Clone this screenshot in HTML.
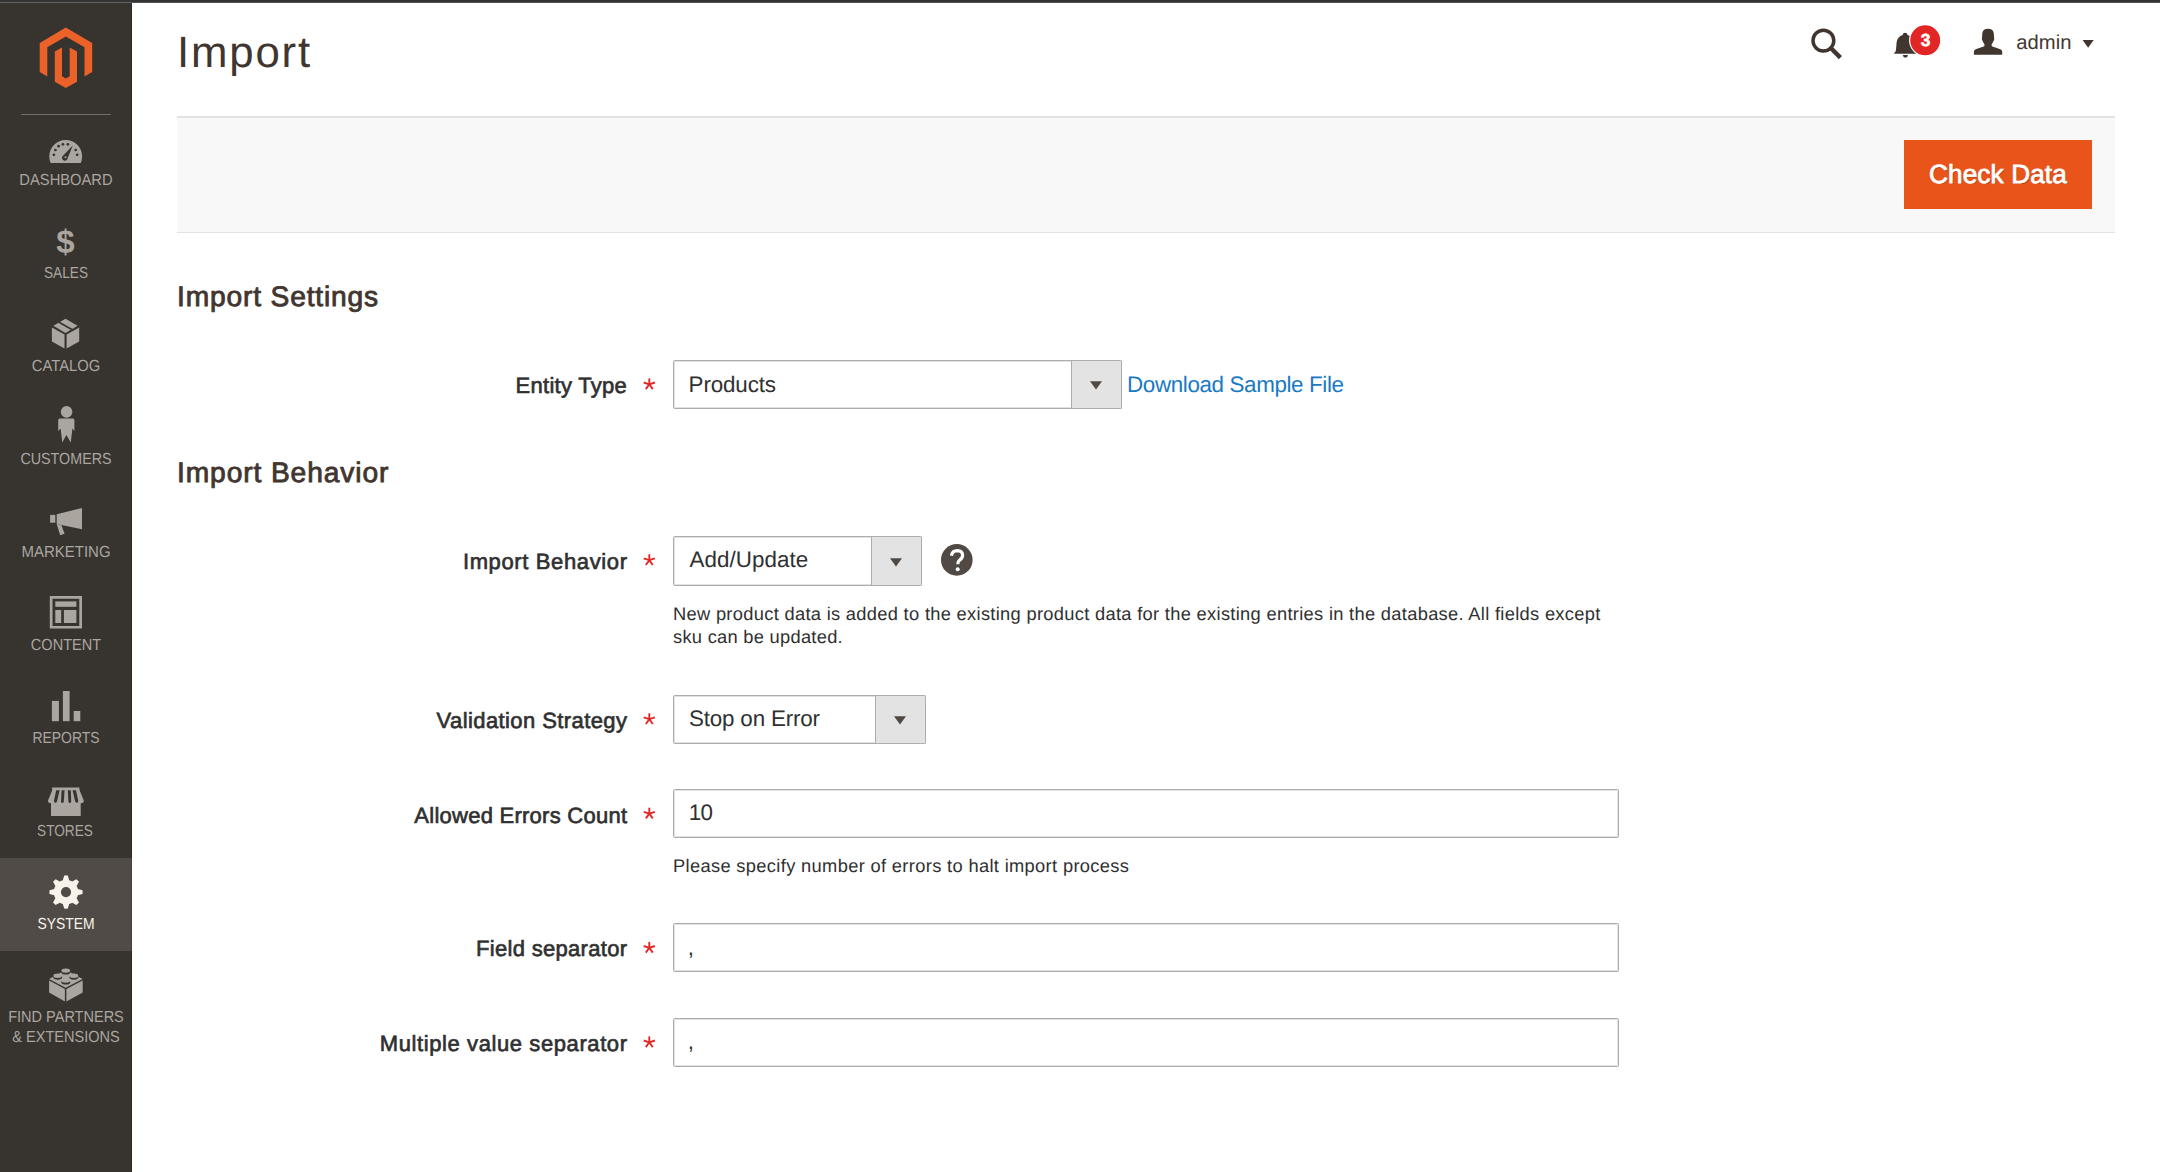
<!DOCTYPE html>
<html><head><meta charset="utf-8"><title>Import</title>
<style>
html,body{margin:0;padding:0;}
body{width:2160px;height:1172px;overflow:hidden;background:#ffffff;position:relative;font-family:"Liberation Sans",sans-serif;text-rendering:geometricPrecision;}
.ab{position:absolute;}
.t{position:absolute;white-space:nowrap;}
.box{position:absolute;box-sizing:border-box;border:1px solid #adadad;border-radius:1.5px;background:#fff;box-shadow:inset 0 0 0 1px #e2e2e2;}
.sel-arr{position:absolute;box-sizing:border-box;border:1px solid #adadad;border-radius:0 1.5px 1.5px 0;background:#e3e3e3;}
</style></head>
<body>
<div class="ab" style="left:0;top:0;width:2160px;height:2px;background:#333333"></div>
<div class="ab" style="left:0;top:2px;width:132px;height:1px;background:#646361"></div>
<div class="ab" style="left:132px;top:2px;width:2028px;height:1px;background:#535353"></div>
<div class="ab" style="left:0;top:3px;width:131px;height:1169px;background:#37332f"></div>
<div class="ab" style="left:131px;top:3px;width:1px;height:1169px;background:#2c2926"></div>
<div class="ab" style="left:0;top:858px;width:131px;height:93px;background:#504b46"></div>
<div class="ab" style="left:131px;top:858px;width:1px;height:93px;background:#46413e"></div>
<div class="ab" style="left:21px;top:114px;width:90px;height:1px;background:#736d68"></div>
<svg class="ab" style="left:0;top:0" width="132" height="110" viewBox="0 0 132 110">
<path fill="#ea6228" d="M65.8 27.4 L39.7 43 L39.7 71.9 L47.3 76.4 L47.3 47.3 L65.8 36.6 L84.5 47.3 L84.5 76.4 L92.2 71.9 L92.2 43 Z"/>
<path fill="#ea6228" d="M54.8 51.4 L62.0 47.4 L62.0 76.3 L65.8 78.6 L69.7 76.3 L69.7 47.4 L77.0 51.4 L77.0 81.7 L65.8 88.1 L54.8 81.7 Z"/>
</svg>
<svg class="ab" style="left:0;top:0" width="132" height="1172" viewBox="0 0 132 1172">
<!-- dashboard -->
<defs><clipPath id="cpd"><rect x="40" y="130" width="52" height="33"/></clipPath></defs>
<g clip-path="url(#cpd)"><circle cx="65.7" cy="156.4" r="16.4" fill="#aaa69f"/></g>
<g fill="#37332f">
<circle cx="53.9" cy="154.8" r="1.35"/><circle cx="55.4" cy="150" r="1.35"/><circle cx="58.6" cy="146.2" r="1.35"/>
<circle cx="62.9" cy="144.3" r="1.35"/><circle cx="67.9" cy="144.3" r="1.35"/><circle cx="75.7" cy="150" r="1.35"/><circle cx="77.2" cy="154.8" r="1.35"/>
<path d="M72.8 145.6 L67.6 158.2 A2.8 2.8 0 1 1 63.2 155.6 Z"/>
</g>
<circle cx="65.5" cy="157.2" r="1.0" fill="#aaa69f"/>
<!-- sales $ -->
<text x="65.5" y="253" text-anchor="middle" font-family="Liberation Sans" font-weight="700" font-size="33" fill="#aaa69f">$</text>
<!-- catalog box -->
<g fill="#aaa69f">
<path d="M65.5 318.7 L77.6 325.8 L65.5 332.9 L53.4 325.8 Z"/>
<path d="M51.9 327.6 L64.5 334.6 L64.5 348.4 L51.9 341.6 Z"/>
<path d="M79.2 327.6 L66.6 334.6 L66.6 348.4 L79.2 341.6 Z"/>
</g>
<path d="M59 322.2 L71.9 329.5" stroke="#37332f" stroke-width="1.7"/>
<!-- customers -->
<g fill="#aaa69f">
<circle cx="66.6" cy="411.9" r="5.8"/>
<path d="M60 418.4 L73 418.4 Q74.4 418.6 74.4 420 L74.4 431 L72.4 428.6 L70.8 442.6 L66.4 435 L62.3 442.6 L60.6 428.6 L58.2 431 L58.2 420 Q58.2 418.6 60 418.4 Z"/>
</g>
<!-- marketing -->
<g fill="#aaa69f">
<rect x="50.1" y="514.9" width="5.2" height="7.8"/>
<path d="M56.7 514.3 L82 508 L82 529.2 L56.7 524 Z"/>
<path d="M56.7 524 L61.3 525 L64.6 533.7 L60.2 535.3 Z"/>
</g>
<!-- content -->
<g fill="#aaa69f">
<path fill-rule="evenodd" d="M49.8 596 L82 596 L82 628.6 L49.8 628.6 Z M52.5 598.7 L79.3 598.7 L79.3 625.9 L52.5 625.9 Z"/>
<rect x="55.3" y="601.4" width="21.1" height="5.4"/>
<rect x="55.3" y="610" width="5.9" height="13"/>
<rect x="63.9" y="610" width="12.5" height="13"/>
</g>
<!-- reports -->
<g fill="#aaa69f">
<rect x="51.9" y="700.9" width="7" height="20.3"/>
<rect x="62.9" y="691" width="6.7" height="30.2"/>
<rect x="73.7" y="711" width="6.6" height="10.2"/>
</g>
<!-- stores -->
<g fill="#aaa69f">
<path d="M52 787.5 L79.3 787.5 L79.6 790.2 L83.8 800.5 Q84 803.3 81 803.3 L51 803.3 Q47.8 803.3 48 800.5 L52.2 790.2 Z"/>
<rect x="51" y="801" width="29.7" height="15"/>
</g>
<g fill="#37332f">
<path d="M56.2 790.3 L59.6 790.3 L57 801.5 Q56 803.2 54.8 802.7 Q53.8 802.2 54 800.6 Z"/>
<path d="M61.6 790.3 L64.6 790.3 L63.8 801.4 Q63.2 803.2 62 802.9 Q61 802.6 61 801.2 Z"/>
<path d="M67.8 790.3 L70.8 790.3 L71.2 801.2 Q71.2 802.6 70.2 802.9 Q69 803.2 68.4 801.4 Z"/>
<path d="M72.6 790.3 L76 790.3 L78.2 800.6 Q78.4 802.2 77.4 802.7 Q76.2 803.2 75.2 801.5 Z"/>
</g>
<!-- system gear -->
<g transform="translate(66 892.1)" fill="#f7f3eb">
<path fill-rule="evenodd" d="M-3.15 -11.89 L-1.82 -16.50 A16.6 16.6 0 0 1 1.82 -16.50 L3.15 -11.89 A12.3 12.3 0 0 1 6.18 -10.64 L10.38 -12.96 A16.6 16.6 0 0 1 12.96 -10.38 L10.64 -6.18 A12.3 12.3 0 0 1 11.89 -3.15 L16.50 -1.82 A16.6 16.6 0 0 1 16.50 1.82 L11.89 3.15 A12.3 12.3 0 0 1 10.64 6.18 L12.96 10.38 A16.6 16.6 0 0 1 10.38 12.96 L6.18 10.64 A12.3 12.3 0 0 1 3.15 11.89 L1.82 16.50 A16.6 16.6 0 0 1 -1.82 16.50 L-3.15 11.89 A12.3 12.3 0 0 1 -6.18 10.64 L-10.38 12.96 A16.6 16.6 0 0 1 -12.96 10.38 L-10.64 6.18 A12.3 12.3 0 0 1 -11.89 3.15 L-16.50 1.82 A16.6 16.6 0 0 1 -16.50 -1.82 L-11.89 -3.15 A12.3 12.3 0 0 1 -10.64 -6.18 L-12.96 -10.38 A16.6 16.6 0 0 1 -10.38 -12.96 L-6.18 -10.64 A12.3 12.3 0 0 1 -3.15 -11.89 Z M5.1 0 A5.1 5.1 0 1 0 -5.1 0 A5.1 5.1 0 1 0 5.1 0 Z"/>
</g>
<!-- lego -->
<g fill="#aaa69f">
<path d="M49.1 979 L65.8 970 L82.7 979 L65.6 987.8 Z"/>
<path d="M49.1 980.5 L64.9 988.9 L64.9 1001.6 L49.1 992.6 Z"/>
<path d="M82.7 980.5 L66.4 988.9 L66.4 1001.6 L82.7 992.6 Z"/>
</g>
<g>
<ellipse cx="65.8" cy="972.2" rx="4.4" ry="2.4" fill="#37332f"/><ellipse cx="65.8" cy="970.6" rx="4.3" ry="2.2" fill="#aaa69f"/>
<ellipse cx="57.7" cy="977.3" rx="4.4" ry="2.4" fill="#37332f"/><ellipse cx="57.7" cy="975.7" rx="4.3" ry="2.2" fill="#aaa69f"/>
<ellipse cx="73.9" cy="977.3" rx="4.4" ry="2.4" fill="#37332f"/><ellipse cx="73.9" cy="975.7" rx="4.3" ry="2.2" fill="#aaa69f"/>
<ellipse cx="65.8" cy="982.2" rx="4.4" ry="2.4" fill="#37332f"/><ellipse cx="65.8" cy="980.6" rx="4.3" ry="2.2" fill="#aaa69f"/>
</g>
</svg>
<svg class="ab" style="left:1790px;top:15px" width="330" height="60" viewBox="1790 15 330 60">
<circle cx="1823.4" cy="40.6" r="10.4" fill="none" stroke="#41362f" stroke-width="3.5"/>
<path d="M1830.5 47.7 L1840.4 57.6" stroke="#41362f" stroke-width="4.4"/>
<path fill="#41362f" d="M1905 32.8 Q1907.3 32.8 1907.6 35 Q1913 36.5 1913.8 42.5 L1914.5 50 Q1915 52.5 1917 53.7 L1893.6 53.7 Q1895.6 52.5 1896 50 L1896.6 42.5 Q1897.4 36.5 1902.6 35 Q1902.9 32.8 1905 32.8 Z"/>
<path fill="#41362f" d="M1902.8 55 L1908 55 Q1907.6 57.8 1905.4 57.8 Q1903.2 57.8 1902.8 55 Z"/>
<circle cx="1925.2" cy="40.3" r="15.6" fill="#e22626" stroke="#ffffff" stroke-width="1.2"/>
<path fill="#41362f" d="M1988 28.7 Q1993.6 28.7 1993.9 34 L1994 37.5 Q1994.6 38.3 1994 40 Q1992.6 43 1991.6 44.6 L1991.8 46.2 Q1996 47.5 2000.4 49.2 Q2002.2 50 2002.2 52 L2002.2 54.7 L1973.9 54.7 L1973.9 52 Q1973.9 50 1975.7 49.2 Q1980 47.5 1984.3 46.2 L1984.5 44.6 Q1983.5 43 1982.1 40 Q1981.5 38.3 1982.1 37.5 L1982.2 34 Q1982.5 28.7 1988 28.7 Z"/>
<path fill="#41362f" d="M2082.6 40.1 L2093.7 40.1 L2088.15 47.8 Z"/>
</svg>
<div class="ab" style="left:177px;top:116px;width:1938px;height:117px;background:#f8f8f8;border-top:2px solid #e3e3e3;border-bottom:1px solid #e3e3e3;box-sizing:border-box"></div>
<div class="ab" style="left:1904px;top:140px;width:188px;height:69px;background:#e9541a"></div>
<div class="box" style="left:673px;top:360px;width:449px;height:49px;"></div>
<div class="sel-arr" style="left:1071px;top:360px;width:51px;height:49px;"></div>
<svg class="ab" style="left:1090.1px;top:381.1px" width="12" height="9" viewBox="0 0 12 9"><path d="M0 0.3 L12 0.3 L6 8.5 Z" fill="#514943"/></svg>
<div class="box" style="left:673px;top:536px;width:249px;height:50px;"></div>
<div class="sel-arr" style="left:871px;top:536px;width:51px;height:50px;"></div>
<svg class="ab" style="left:890.1px;top:557.6px" width="12" height="9" viewBox="0 0 12 9"><path d="M0 0.3 L12 0.3 L6 8.5 Z" fill="#514943"/></svg>
<div class="box" style="left:673px;top:695px;width:253px;height:49px;"></div>
<div class="sel-arr" style="left:875px;top:695px;width:51px;height:49px;"></div>
<svg class="ab" style="left:894.1px;top:716.1px" width="12" height="9" viewBox="0 0 12 9"><path d="M0 0.3 L12 0.3 L6 8.5 Z" fill="#514943"/></svg>
<div class="box" style="left:673px;top:789px;width:946px;height:49px;"></div>
<div class="box" style="left:673px;top:923px;width:946px;height:49px;"></div>
<div class="box" style="left:673px;top:1018px;width:946px;height:49px;"></div>
<svg class="ab" style="left:0;top:0;overflow:visible" width="1" height="1"><g stroke="#e22626" stroke-width="1.9" stroke-linecap="butt"><line x1="649.30" y1="384.30" x2="649.30" y2="378.40"/><line x1="649.30" y1="384.30" x2="654.91" y2="382.48"/><line x1="649.30" y1="384.30" x2="652.77" y2="389.07"/><line x1="649.30" y1="384.30" x2="645.83" y2="389.07"/><line x1="649.30" y1="384.30" x2="643.69" y2="382.48"/></g><circle cx="649.30" cy="384.30" r="1.3" fill="#e22626"/></svg>
<svg class="ab" style="left:0;top:0;overflow:visible" width="1" height="1"><g stroke="#e22626" stroke-width="1.9" stroke-linecap="butt"><line x1="649.30" y1="560.20" x2="649.30" y2="554.30"/><line x1="649.30" y1="560.20" x2="654.91" y2="558.38"/><line x1="649.30" y1="560.20" x2="652.77" y2="564.97"/><line x1="649.30" y1="560.20" x2="645.83" y2="564.97"/><line x1="649.30" y1="560.20" x2="643.69" y2="558.38"/></g><circle cx="649.30" cy="560.20" r="1.3" fill="#e22626"/></svg>
<svg class="ab" style="left:0;top:0;overflow:visible" width="1" height="1"><g stroke="#e22626" stroke-width="1.9" stroke-linecap="butt"><line x1="649.30" y1="719.20" x2="649.30" y2="713.30"/><line x1="649.30" y1="719.20" x2="654.91" y2="717.38"/><line x1="649.30" y1="719.20" x2="652.77" y2="723.97"/><line x1="649.30" y1="719.20" x2="645.83" y2="723.97"/><line x1="649.30" y1="719.20" x2="643.69" y2="717.38"/></g><circle cx="649.30" cy="719.20" r="1.3" fill="#e22626"/></svg>
<svg class="ab" style="left:0;top:0;overflow:visible" width="1" height="1"><g stroke="#e22626" stroke-width="1.9" stroke-linecap="butt"><line x1="649.30" y1="813.60" x2="649.30" y2="807.70"/><line x1="649.30" y1="813.60" x2="654.91" y2="811.78"/><line x1="649.30" y1="813.60" x2="652.77" y2="818.37"/><line x1="649.30" y1="813.60" x2="645.83" y2="818.37"/><line x1="649.30" y1="813.60" x2="643.69" y2="811.78"/></g><circle cx="649.30" cy="813.60" r="1.3" fill="#e22626"/></svg>
<svg class="ab" style="left:0;top:0;overflow:visible" width="1" height="1"><g stroke="#e22626" stroke-width="1.9" stroke-linecap="butt"><line x1="649.30" y1="947.80" x2="649.30" y2="941.90"/><line x1="649.30" y1="947.80" x2="654.91" y2="945.98"/><line x1="649.30" y1="947.80" x2="652.77" y2="952.57"/><line x1="649.30" y1="947.80" x2="645.83" y2="952.57"/><line x1="649.30" y1="947.80" x2="643.69" y2="945.98"/></g><circle cx="649.30" cy="947.80" r="1.3" fill="#e22626"/></svg>
<svg class="ab" style="left:0;top:0;overflow:visible" width="1" height="1"><g stroke="#e22626" stroke-width="1.9" stroke-linecap="butt"><line x1="649.30" y1="1042.30" x2="649.30" y2="1036.40"/><line x1="649.30" y1="1042.30" x2="654.91" y2="1040.48"/><line x1="649.30" y1="1042.30" x2="652.77" y2="1047.07"/><line x1="649.30" y1="1042.30" x2="645.83" y2="1047.07"/><line x1="649.30" y1="1042.30" x2="643.69" y2="1040.48"/></g><circle cx="649.30" cy="1042.30" r="1.3" fill="#e22626"/></svg>
<svg class="ab" style="left:940px;top:543px" width="34" height="34" viewBox="940 543 34 34">
<circle cx="956.8" cy="559.9" r="15.8" fill="#514943"/>
<path d="M951.5 555.7 Q952.2 550.6 957.3 550.6 Q962.6 550.8 962.6 555.3 Q962.6 558.2 959.6 560.1 Q957.8 561.3 957.8 564.3" fill="none" stroke="#ffffff" stroke-width="3.2" stroke-linecap="butt"/>
<circle cx="957.7" cy="569.2" r="2.0" fill="#ffffff"/>
</svg>
<div class="t" id="title" style="top:30.92px;font-size:43.8px;line-height:43.8px;font-weight:400;color:#41362f;letter-spacing:1.780px;left:177.10px;">Import</div>
<div class="t" id="sec1" style="top:281.93px;font-size:28.2px;line-height:28.2px;font-weight:400;color:#41362f;letter-spacing:0.829px;left:177.00px;-webkit-text-stroke:0.85px #41362f;">Import Settings</div>
<div class="t" id="sec2" style="top:458.43px;font-size:28.2px;line-height:28.2px;font-weight:400;color:#41362f;letter-spacing:0.886px;left:177.00px;-webkit-text-stroke:0.85px #41362f;">Import Behavior</div>
<div class="t" id="l_entity" style="top:374.98px;font-size:22px;line-height:22px;font-weight:400;color:#303030;letter-spacing:0.280px;right:1532.92px;-webkit-text-stroke:0.65px #303030;">Entity Type</div>
<div class="t" id="l_beh" style="top:550.88px;font-size:22px;line-height:22px;font-weight:400;color:#303030;letter-spacing:0.629px;right:1532.37px;-webkit-text-stroke:0.65px #303030;">Import Behavior</div>
<div class="t" id="l_val" style="top:709.78px;font-size:22px;line-height:22px;font-weight:400;color:#303030;letter-spacing:0.411px;right:1532.59px;-webkit-text-stroke:0.65px #303030;">Validation Strategy</div>
<div class="t" id="l_err" style="top:804.58px;font-size:22px;line-height:22px;font-weight:400;color:#303030;letter-spacing:0.253px;right:1532.75px;-webkit-text-stroke:0.65px #303030;">Allowed Errors Count</div>
<div class="t" id="l_fs" style="top:937.88px;font-size:22px;line-height:22px;font-weight:400;color:#303030;letter-spacing:0.300px;right:1532.70px;-webkit-text-stroke:0.65px #303030;">Field separator</div>
<div class="t" id="l_ms" style="top:1033.38px;font-size:22px;line-height:22px;font-weight:400;color:#303030;letter-spacing:0.591px;right:1532.41px;-webkit-text-stroke:0.65px #303030;">Multiple value separator</div>
<div class="t" id="v_entity" style="top:373.84px;font-size:22.4px;line-height:22.4px;font-weight:400;color:#303030;letter-spacing:-0.143px;left:688.60px;">Products</div>
<div class="t" id="v_beh" style="top:549.44px;font-size:22.4px;line-height:22.4px;font-weight:400;color:#303030;letter-spacing:0.044px;left:689.60px;">Add/Update</div>
<div class="t" id="v_val" style="top:707.84px;font-size:22.4px;line-height:22.4px;font-weight:400;color:#303030;letter-spacing:-0.183px;left:689.00px;">Stop on Error</div>
<div class="t" id="v_err" style="top:801.94px;font-size:22.4px;line-height:22.4px;font-weight:400;color:#303030;letter-spacing:-0.800px;left:688.80px;">10</div>
<div class="t" id="v_fs" style="top:936.54px;font-size:22.4px;line-height:22.4px;font-weight:400;color:#303030;letter-spacing:0.000px;left:687.80px;">,</div>
<div class="t" id="v_ms" style="top:1031.04px;font-size:22.4px;line-height:22.4px;font-weight:400;color:#303030;letter-spacing:0.000px;left:687.80px;">,</div>
<div class="t" id="link" style="top:374.04px;font-size:22.4px;line-height:22.4px;font-weight:400;color:#1979c3;letter-spacing:-0.368px;left:1127.00px;">Download Sample File</div>
<div class="t" id="note1a" style="top:604.51px;font-size:18.3px;line-height:18.3px;font-weight:400;color:#303030;letter-spacing:0.310px;left:673.00px;">New product data is added to the existing product data for the existing entries in the database. All fields except</div>
<div class="t" id="note1b" style="top:628.21px;font-size:18.3px;line-height:18.3px;font-weight:400;color:#303030;letter-spacing:0.278px;left:673.00px;">sku can be updated.</div>
<div class="t" id="note2" style="top:857.01px;font-size:18.3px;line-height:18.3px;font-weight:400;color:#303030;letter-spacing:0.340px;left:673.00px;">Please specify number of errors to halt import process</div>
<div class="t" id="btn" style="top:161.12px;font-size:26.2px;line-height:26.2px;font-weight:400;color:#ffffff;letter-spacing:0.111px;left:1929.00px;-webkit-text-stroke:0.8px #ffffff;text-shadow:1px 1px 0 rgba(0,0,0,0.25);">Check Data</div>
<div class="t" id="admin" style="top:33.10px;font-size:20.2px;line-height:20.2px;font-weight:400;color:#41362f;letter-spacing:0.100px;left:2016.20px;">admin</div>
<div class="t" id="badge" style="top:31.97px;font-size:17.4px;line-height:17.4px;font-weight:700;color:#ffffff;letter-spacing:0.000px;left:1625.50px;width:600px;text-align:center;-webkit-text-stroke:0.5px #ffffff;">3</div>
<div class="t" id="s_dashboard" style="top:173.36px;font-size:16px;line-height:16px;font-weight:400;color:#aaa6a0;letter-spacing:0.000px;left:-233.80px;width:600px;text-align:center;transform:scaleX(0.9200);">DASHBOARD</div>
<div class="t" id="s_sales" style="top:266.36px;font-size:16px;line-height:16px;font-weight:400;color:#aaa6a0;letter-spacing:0.000px;left:-234.30px;width:600px;text-align:center;transform:scaleX(0.8530);">SALES</div>
<div class="t" id="s_catalog" style="top:359.36px;font-size:16px;line-height:16px;font-weight:400;color:#aaa6a0;letter-spacing:0.000px;left:-234.05px;width:600px;text-align:center;transform:scaleX(0.9214);">CATALOG</div>
<div class="t" id="s_customers" style="top:452.36px;font-size:16px;line-height:16px;font-weight:400;color:#aaa6a0;letter-spacing:0.000px;left:-234.20px;width:600px;text-align:center;transform:scaleX(0.8946);">CUSTOMERS</div>
<div class="t" id="s_marketing" style="top:545.36px;font-size:16px;line-height:16px;font-weight:400;color:#aaa6a0;letter-spacing:0.000px;left:-234.05px;width:600px;text-align:center;transform:scaleX(0.9370);">MARKETING</div>
<div class="t" id="s_content" style="top:638.36px;font-size:16px;line-height:16px;font-weight:400;color:#aaa6a0;letter-spacing:0.000px;left:-234.20px;width:600px;text-align:center;transform:scaleX(0.9091);">CONTENT</div>
<div class="t" id="s_reports" style="top:731.36px;font-size:16px;line-height:16px;font-weight:400;color:#aaa6a0;letter-spacing:0.000px;left:-234.05px;width:600px;text-align:center;transform:scaleX(0.8710);">REPORTS</div>
<div class="t" id="s_stores" style="top:824.36px;font-size:16px;line-height:16px;font-weight:400;color:#aaa6a0;letter-spacing:0.000px;left:-235.20px;width:600px;text-align:center;transform:scaleX(0.8517);">STORES</div>
<div class="t" id="s_system" style="top:917.36px;font-size:16px;line-height:16px;font-weight:400;color:#f7f3eb;letter-spacing:0.000px;left:-234.20px;width:600px;text-align:center;transform:scaleX(0.8696);">SYSTEM</div>
<div class="t" id="s_find1" style="top:1009.86px;font-size:16px;line-height:16px;font-weight:400;color:#aaa6a0;letter-spacing:0.000px;left:-234.05px;width:600px;text-align:center;transform:scaleX(0.9073);">FIND PARTNERS</div>
<div class="t" id="s_find2" style="top:1030.36px;font-size:16px;line-height:16px;font-weight:400;color:#aaa6a0;letter-spacing:0.000px;left:-233.85px;width:600px;text-align:center;transform:scaleX(0.9091);">&amp; EXTENSIONS</div>
</body></html>
